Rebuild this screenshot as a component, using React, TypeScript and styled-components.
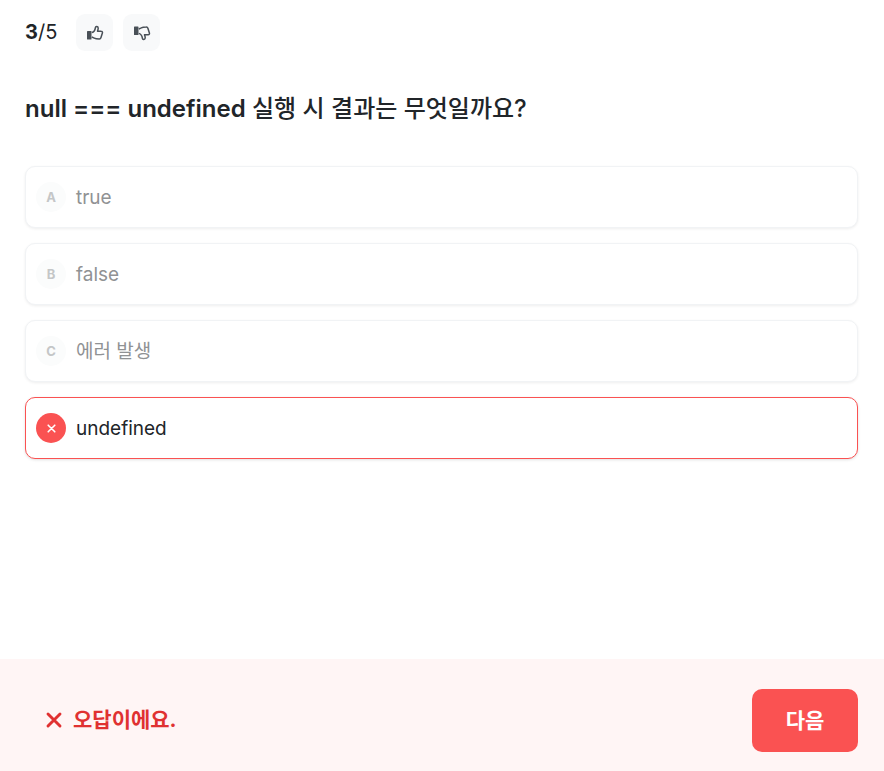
import React from "react";
import styled, { createGlobalStyle } from "styled-components";

const Global = createGlobalStyle`
  *, *::before, *::after { box-sizing: border-box; }
  body { margin: 0; background: #fff; color: #212529; font-family: Inter, "Noto Sans CJK KR", sans-serif; }
  button { font: inherit; color: inherit; cursor: pointer; }
  h1, p { margin: 0; }
`;
const Page = styled.div`
  min-height: 100vh;
  display: flex;
  flex-direction: column;
`;
const Content = styled.main`
  flex: 1;
  padding: 14px 26px 24px 25px;
`;
const Toolbar = styled.header`
  display: flex;
  align-items: flex-start;
  gap: 19px;
`;
const Progress = styled.p`
  font-size: 20px;
  line-height: 36px;
`;
const Votes = styled.div`
  display: flex;
  gap: 10px;
`;
const VoteButton = styled.button`
  display: grid;
  place-items: center;
  width: 37px;
  height: 37px;
  padding: 0;
  border: 0;
  border-radius: 9px;
  background: #f8f9fa;
  color: #495057;
`;
const Question = styled.h1`
  margin: 39px 0 38px;
  font-size: 24px;
  font-weight: 600;
  line-height: 38px;
`;
const Korean = styled.span`
  font-weight: 500;
`;
const Options = styled.div`
  display: grid;
  gap: 15px;
`;
const Option = styled.button<{ $wrong?: boolean }>`
  display: flex;
  align-items: center;
  gap: 10px;
  height: 62px;
  padding: 0 10px;
  border: 1px solid ${(p) => (p.$wrong ? "#fa5252" : "#f1f3f5")};
  border-radius: 10px;
  background: #fff;
  box-shadow: 0 1px 3px ${(p) => (p.$wrong ? "rgba(0, 0, 0, 0.12)" : "rgba(0, 0, 0, 0.07)")};
  color: ${(p) => (p.$wrong ? "#212529" : "#909294")};
  font-size: 19px;
  line-height: 25px;
  text-align: left;
`;
const Badge = styled.span<{ $wrong?: boolean }>`
  display: grid;
  place-items: center;
  width: 30px;
  height: 30px;
  border-radius: 50%;
  background: ${(p) => (p.$wrong ? "#fa5252" : "#fbfcfc")};
  color: ${(p) => (p.$wrong ? "#fff" : "#c4c6c7")};
  font-size: 13px;
  font-weight: 700;
`;
const Footer = styled.footer`
  display: flex;
  align-items: center;
  justify-content: space-between;
  padding: 30px 26px 19px 44px;
  background: #fff5f5;
`;
const Result = styled.p`
  display: flex;
  align-items: center;
  gap: 9px;
  padding-bottom: 2px;
  color: #e03131;
  font-size: 21px;
  font-weight: 700;
  line-height: 28px;
`;
const Next = styled.button`
  min-width: 106px;
  height: 63px;
  padding: 0 32px;
  border: 0;
  border-radius: 10px;
  background: #fa5252;
  && { color: #fff; font-size: 21px; font-weight: 600; line-height: 28px; }
`;

const Thumb = ({ down }: { down?: boolean }) => (
  <svg width="18" height="18" viewBox="0 0 18 18" fill="none" aria-hidden="true">
    <g transform={down ? "matrix(1 0 0 -1 0 18)" : undefined}>
      <rect x="1" y="7" width="4.5" height="8.5" rx=".6" fill="currentColor" />
      <path
        d="M5.800 8.600C7.800 8 9.100 6.200 9.400 3.600c.2-1.500 2.600-1.400 2.800.4.1 1.200-.4 2-.7 3.200l3.600.1c1.200 0 1.600.9 1.300 1.800l-1.500 4.700c-.3.9-.8 1.300-1.700 1.200-1.800-.1-3.500-.2-4.900-.9L5.800 13"
        stroke="currentColor"
        strokeWidth="1.5"
        strokeLinejoin="round"
      />
    </g>
  </svg>
);
const Cross = ({ size }: { size: number }) => (
  <svg width={size} height={size} viewBox="0 0 20 20" aria-hidden="true">
    <path d="M4 4 16 16M16 4 4 16" stroke="currentColor" strokeWidth="2.9" strokeLinecap="round" />
  </svg>
);

const choices = [
  { letter: "A", text: "true" },
  { letter: "B", text: "false" },
  { letter: "C", text: "에러 발생" },
  { letter: "D", text: "undefined", wrong: true },
];

export default function App() {
  return (
    <Page lang="ko">
      <Global />
      <Content>
        <Toolbar>
          <Progress><strong>3</strong>/5</Progress>
          <Votes>
            <VoteButton aria-label="좋아요"><Thumb /></VoteButton>
            <VoteButton aria-label="싫어요"><Thumb down /></VoteButton>
          </Votes>
        </Toolbar>
        <Question>null === undefined<Korean> 실행 시 결과는 무엇일까요?</Korean></Question>
        <Options>
          {choices.map((c) => (
            <Option key={c.letter} $wrong={c.wrong}>
              <Badge $wrong={c.wrong}>{c.wrong ? <Cross size={11} /> : c.letter}</Badge>
              {c.text}
            </Option>
          ))}
        </Options>
      </Content>
      <Footer>
        <Result><Cross size={20} />오답이에요.</Result>
        <Next>다음</Next>
      </Footer>
    </Page>
  );
}
